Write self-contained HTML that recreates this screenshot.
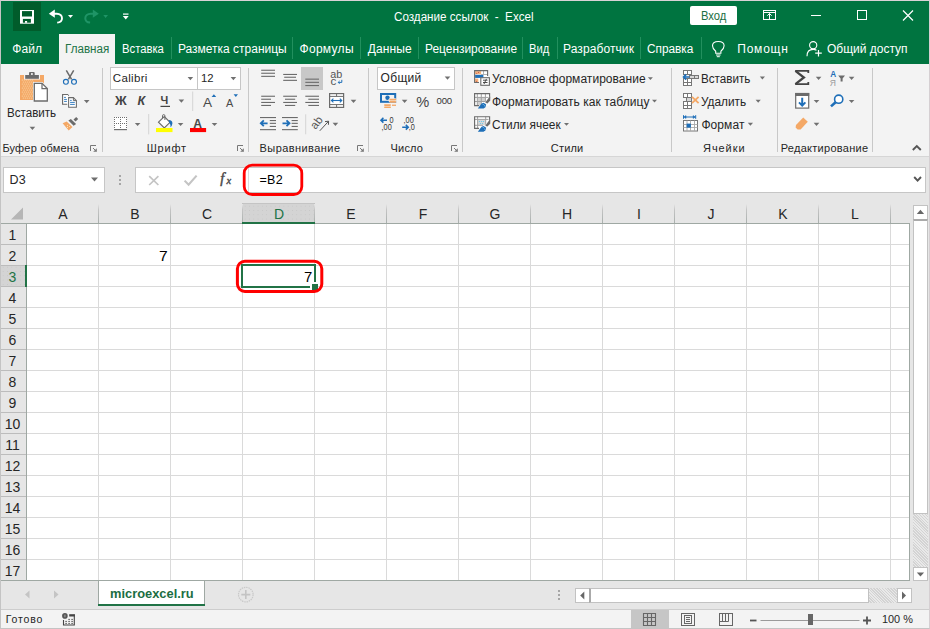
<!DOCTYPE html>
<html><head><meta charset="utf-8">
<style>
*{box-sizing:border-box}
html,body{margin:0;padding:0;width:930px;height:629px;overflow:hidden;background:#e6e6e6;font-family:"Liberation Sans",sans-serif;color:#262626}
.a{position:absolute}
svg{position:absolute;overflow:visible}
.t{position:absolute;white-space:nowrap;line-height:1;transform-origin:0 0}
.tsep{position:absolute;top:37px;width:1px;height:22px;background:#22905e}
.gsep{position:absolute;top:68px;width:1px;height:84px;background:#c8c8c8}
.dd{position:absolute;width:0;height:0;border-left:3.5px solid transparent;border-right:3.5px solid transparent;border-top:4px solid #767676}
.vl{position:absolute;top:224px;width:1px;height:357px;background:#dadada}
.hl{position:absolute;left:27px;width:882px;height:1px;background:#dadada}
.ch{position:absolute;top:207px;width:72px;text-align:center;font-size:14px;color:#262626;line-height:1}
.ch.sel{color:#217346}
.chs{position:absolute;top:204px;width:1px;height:19px;background:linear-gradient(#e6e6e6,#c4c4c4 30%,#a9b0ad)}
.rh{position:absolute;left:0;width:25px;text-align:center;font-size:14px;color:#262626;line-height:1;padding-top:4px;height:21px}
.rh.sel{color:#217346}
.rhs{position:absolute;left:1px;width:25px;height:1px;background:#bcbcbc}
</style></head><body>

<!-- TITLE BAR + TABS -->
<div class="a" style="left:0;top:0;width:930px;height:64px;background:#007440"></div>
<div class="a" style="left:13px;top:2px;width:28px;height:29px;background:#015c2b"></div>
<div class="a" style="left:690px;top:6px;width:47px;height:19px;background:#fff;border-radius:2px"></div>
<div class="a" style="left:59px;top:34px;width:56px;height:30px;background:#f3f3f3"></div>
<div class="tsep" style="left:171px"></div>
<div class="tsep" style="left:292px"></div>
<div class="tsep" style="left:360px"></div>
<div class="tsep" style="left:418px"></div>
<div class="tsep" style="left:522px"></div>
<div class="tsep" style="left:557px"></div>
<div class="tsep" style="left:640px"></div>
<div class="tsep" style="left:701px"></div>

<svg style="left:0;top:0" width="930" height="64">
 <!-- floppy -->
 <rect x="20" y="10" width="14" height="13.7" fill="#fff"/>
 <rect x="22" y="11.1" width="10" height="5.4" fill="#015c2b"/>
 <rect x="22.9" y="18.9" width="8" height="3.8" fill="#015c2b"/>
 <rect x="25" y="21" width="2.1" height="1.8" fill="#fff"/>
 <!-- undo -->
 <path d="M53.5 13.7 H56.8 C60 13.7 62 15.8 62 18.2 C62 20.8 60 22.4 57.2 22.6" fill="none" stroke="#fff" stroke-width="1.9"/>
 <path d="M48.8 13.7 L54.8 9.6 V17.8 Z" fill="#fff"/>
 <path d="M68 15 H73 L70.5 18 Z" fill="#fff"/>
 <!-- redo (disabled) -->
 <path d="M94 13.7 H90.7 C87.5 13.7 85.3 15.8 85.3 18.2 C85.3 20.8 87.3 22.4 90.1 22.6" fill="none" stroke="#1f9466" stroke-width="2"/>
 <path d="M98.8 13.7 L92.8 9.6 V17.8 Z" fill="#1f9466"/>
 <path d="M103.3 15 H108 L105.6 18 Z" fill="#1f9466"/>
 <!-- customize -->
 <rect x="123" y="13.5" width="5.5" height="1.2" fill="#fff"/>
 <path d="M122.8 16 H128.7 L125.75 19.5 Z" fill="#fff"/>
 <!-- ribbon display options -->
 <rect x="763.5" y="10.5" width="12" height="9" fill="none" stroke="#fff" stroke-width="1"/>
 <path d="M763.5 12.5 H775.5" stroke="#fff" stroke-width="1"/>
 <path d="M769.5 13.5 V19.5 M767.3 15.7 L769.5 13.5 L771.7 15.7" fill="none" stroke="#fff" stroke-width="1"/>
 <!-- minimize -->
 <rect x="811" y="15" width="10" height="1" fill="#fff"/>
 <!-- maximize -->
 <rect x="857.5" y="10.5" width="9" height="9" fill="none" stroke="#fff" stroke-width="1"/>
 <!-- close -->
 <path d="M903 10.5 L913 20.5 M913 10.5 L903 20.5" stroke="#fff" stroke-width="1.2"/>
 <!-- lightbulb -->
 <path d="M715.7 51.2 C713.2 49.2 712.5 47.5 712.5 45.8 C712.5 43.2 714.6 41.5 718.3 41.5 C722 41.5 724.1 43.2 724.1 45.8 C724.1 47.5 723.4 49.2 720.9 51.2 V53.2 H715.7 Z" fill="none" stroke="#fff" stroke-width="1.1"/>
 <path d="M716 55 H720.6 M716.8 56.7 H719.8" stroke="#fff" stroke-width="1"/>
 <!-- person plus -->
 <circle cx="813.2" cy="45.2" r="3.6" fill="none" stroke="#fff" stroke-width="1.1"/>
 <path d="M807 56.2 C807 51.6 809.5 49.4 813.2 49.4 C814.6 49.4 815.7 49.7 816.5 50.2" fill="none" stroke="#fff" stroke-width="1.1"/>
 <path d="M815.2 53.2 H821.8 M818.5 49.9 V56.5" stroke="#fff" stroke-width="1.2"/>
</svg>


<!-- RIBBON -->
<div class="a" style="left:0;top:64px;width:930px;height:92px;background:#f3f3f3"></div>
<div class="a" style="left:0;top:156px;width:930px;height:1px;background:#d6d6d6"></div>
<div class="gsep" style="left:102px"></div>
<div class="gsep" style="left:248px"></div>
<div class="gsep" style="left:368px"></div>
<div class="gsep" style="left:462px"></div>
<div class="gsep" style="left:671px"></div>
<div class="gsep" style="left:777px"></div>
<div class="gsep" style="left:872px"></div>
<div class="a" style="left:110px;top:67px;width:88px;height:23px;background:#fff;border:1px solid #c6c6c6"></div>
<div class="a" style="left:197px;top:67px;width:44px;height:23px;background:#fff;border:1px solid #c6c6c6"></div>
<div class="a" style="left:377px;top:67px;width:78px;height:23px;background:#fff;border:1px solid #c6c6c6"></div>
<div class="a" style="left:301px;top:67px;width:22px;height:23px;background:#c8c8c8"></div>
<svg style="left:0;top:0" width="930" height="160"><rect x="20" y="75" width="24" height="25" fill="#f4a866"/>
<circle cx="22.3" cy="80.0" r="0.55" fill="#fbe0b4"/><circle cx="23.3" cy="82.0" r="0.55" fill="#fbe0b4"/><circle cx="22.3" cy="84.0" r="0.55" fill="#fbe0b4"/><circle cx="23.3" cy="86.0" r="0.55" fill="#fbe0b4"/><circle cx="22.3" cy="88.0" r="0.55" fill="#fbe0b4"/><circle cx="23.3" cy="90.0" r="0.55" fill="#fbe0b4"/><circle cx="22.3" cy="92.0" r="0.55" fill="#fbe0b4"/><circle cx="23.3" cy="94.0" r="0.55" fill="#fbe0b4"/><circle cx="22.3" cy="96.0" r="0.55" fill="#fbe0b4"/><circle cx="23.3" cy="98.0" r="0.55" fill="#fbe0b4"/><circle cx="24.3" cy="80.0" r="0.55" fill="#fbe0b4"/><circle cx="25.3" cy="82.0" r="0.55" fill="#fbe0b4"/><circle cx="24.3" cy="84.0" r="0.55" fill="#fbe0b4"/><circle cx="25.3" cy="86.0" r="0.55" fill="#fbe0b4"/><circle cx="24.3" cy="88.0" r="0.55" fill="#fbe0b4"/><circle cx="25.3" cy="90.0" r="0.55" fill="#fbe0b4"/><circle cx="24.3" cy="92.0" r="0.55" fill="#fbe0b4"/><circle cx="25.3" cy="94.0" r="0.55" fill="#fbe0b4"/><circle cx="24.3" cy="96.0" r="0.55" fill="#fbe0b4"/><circle cx="25.3" cy="98.0" r="0.55" fill="#fbe0b4"/><circle cx="26.3" cy="80.0" r="0.55" fill="#fbe0b4"/><circle cx="27.3" cy="82.0" r="0.55" fill="#fbe0b4"/><circle cx="26.3" cy="84.0" r="0.55" fill="#fbe0b4"/><circle cx="27.3" cy="86.0" r="0.55" fill="#fbe0b4"/><circle cx="26.3" cy="88.0" r="0.55" fill="#fbe0b4"/><circle cx="27.3" cy="90.0" r="0.55" fill="#fbe0b4"/><circle cx="26.3" cy="92.0" r="0.55" fill="#fbe0b4"/><circle cx="27.3" cy="94.0" r="0.55" fill="#fbe0b4"/><circle cx="26.3" cy="96.0" r="0.55" fill="#fbe0b4"/><circle cx="27.3" cy="98.0" r="0.55" fill="#fbe0b4"/><circle cx="28.3" cy="80.0" r="0.55" fill="#fbe0b4"/><circle cx="29.3" cy="82.0" r="0.55" fill="#fbe0b4"/><circle cx="28.3" cy="84.0" r="0.55" fill="#fbe0b4"/><circle cx="29.3" cy="86.0" r="0.55" fill="#fbe0b4"/><circle cx="28.3" cy="88.0" r="0.55" fill="#fbe0b4"/><circle cx="29.3" cy="90.0" r="0.55" fill="#fbe0b4"/><circle cx="28.3" cy="92.0" r="0.55" fill="#fbe0b4"/><circle cx="29.3" cy="94.0" r="0.55" fill="#fbe0b4"/><circle cx="28.3" cy="96.0" r="0.55" fill="#fbe0b4"/><circle cx="29.3" cy="98.0" r="0.55" fill="#fbe0b4"/><circle cx="30.3" cy="80.0" r="0.55" fill="#fbe0b4"/><circle cx="31.3" cy="82.0" r="0.55" fill="#fbe0b4"/><circle cx="30.3" cy="84.0" r="0.55" fill="#fbe0b4"/><circle cx="31.3" cy="86.0" r="0.55" fill="#fbe0b4"/><circle cx="30.3" cy="88.0" r="0.55" fill="#fbe0b4"/><circle cx="31.3" cy="90.0" r="0.55" fill="#fbe0b4"/><circle cx="30.3" cy="92.0" r="0.55" fill="#fbe0b4"/><circle cx="31.3" cy="94.0" r="0.55" fill="#fbe0b4"/><circle cx="30.3" cy="96.0" r="0.55" fill="#fbe0b4"/><circle cx="31.3" cy="98.0" r="0.55" fill="#fbe0b4"/><circle cx="32.3" cy="80.0" r="0.55" fill="#fbe0b4"/><circle cx="33.3" cy="82.0" r="0.55" fill="#fbe0b4"/><circle cx="32.3" cy="84.0" r="0.55" fill="#fbe0b4"/><circle cx="33.3" cy="86.0" r="0.55" fill="#fbe0b4"/><circle cx="32.3" cy="88.0" r="0.55" fill="#fbe0b4"/><circle cx="33.3" cy="90.0" r="0.55" fill="#fbe0b4"/><circle cx="32.3" cy="92.0" r="0.55" fill="#fbe0b4"/><circle cx="33.3" cy="94.0" r="0.55" fill="#fbe0b4"/><circle cx="32.3" cy="96.0" r="0.55" fill="#fbe0b4"/><circle cx="33.3" cy="98.0" r="0.55" fill="#fbe0b4"/>
<rect x="24" y="73.5" width="16" height="6" fill="#f3f3f3"/>
<rect x="25.2" y="75" width="13.7" height="3.8" fill="#6b6b6b"/>
<rect x="29" y="72" width="5.7" height="4" rx="1" fill="#6b6b6b"/>
<rect x="31" y="73.2" width="1.8" height="1.6" fill="#fff"/>
<path d="M33 82 H42.5 L48.5 88 V102 H33 Z" fill="#f3f3f3"/>
<path d="M34.3 83.3 H42 L47.3 88.6 V101 H34.3 Z" fill="#fff" stroke="#6b6b6b" stroke-width="1.3"/>
<path d="M42 83.3 V88.6 H47.3" fill="none" stroke="#6b6b6b" stroke-width="1.2"/>
<path d="M29.60 126.70 H35.20 L32.40 129.90 Z" fill="#707070"/>
<path d="M66.3 70.3 L71.6 79.4 M73.7 70.3 L68.4 79.4" stroke="#6b6b6b" stroke-width="1.5"/>
<circle cx="65.9" cy="81.8" r="2.45" fill="none" stroke="#1f6fb8" stroke-width="1.15"/>
<circle cx="74.0" cy="81.8" r="2.45" fill="none" stroke="#1f6fb8" stroke-width="1.15"/>
<path d="M62.6 104.3 V94.6 H67.6 L68.8 95.8" fill="#fff" stroke="#6b6b6b" stroke-width="1.05"/>
<rect x="63.1" y="95.1" width="5" height="9" fill="#fff"/>
<path d="M62.6 104.2 H67.2 M62.6 94.6 V104.7" stroke="#6b6b6b" stroke-width="1.05"/>
<path d="M64.1 97.4 H65.9 M64.1 99.4 H66.9 M64.1 101.4 H66.9" stroke="#1f6fb8" stroke-width="0.9"/>
<path d="M68.6 97.6 H73.4 L76.4 100.6 V107.2 H68.6 Z" fill="#fff" stroke="#6b6b6b" stroke-width="1.05"/>
<path d="M73.4 97.6 V100.6 H76.4" fill="none" stroke="#6b6b6b" stroke-width="1"/>
<path d="M70.1 100.4 H71.7 M70.1 102.4 H74.8 M70.1 104.4 H74.8" stroke="#1f6fb8" stroke-width="0.9"/>
<path d="M83.90 100.00 H89.50 L86.70 103.20 Z" fill="#707070"/>
<path d="M62.6 123.3 L66.7 121.6 L72.5 127.1 L68.7 130.6 Z" fill="#f4a866"/>
<path d="M68.4 120.6 L70.9 118.9 L76.1 124.1 L73.6 125.8 Z" fill="#6b6b6b"/>
<path d="M73.5 119.4 L76.2 116.9 L78.2 118.9 L75.5 121.5 Z" fill="#6b6b6b"/>
<circle cx="67.4" cy="125.4" r="0.55" fill="#fde6b8"/><circle cx="69.5" cy="126.5" r="0.55" fill="#fde6b8"/><circle cx="67.5" cy="127.4" r="0.55" fill="#fde6b8"/>
<path d="M187.60 77.00 H193.20 L190.40 80.20 Z" fill="#707070"/>
<path d="M230.60 77.00 H236.20 L233.40 80.20 Z" fill="#707070"/>
<text x="115" y="104.8" font-family="Liberation Sans" font-weight="bold" font-size="12.3" fill="#444" transform="translate(115 0) scale(1.05 1) translate(-115 0)">Ж</text>
<text x="137.6" y="105" font-family="Liberation Sans" font-weight="bold" font-style="italic" font-size="12.5" fill="#444">К</text>
<text x="160.6" y="103.7" font-family="Liberation Sans" font-weight="bold" font-size="11" fill="#444">Ч</text>
<rect x="160.5" y="105.8" width="9.5" height="1.2" fill="#444"/>
<path d="M178.60 99.60 H184.20 L181.40 102.80 Z" fill="#707070"/>
<rect x="192.2" y="91.5" width="1" height="19.5" fill="#d4d4d4"/>
<text x="203" y="106.8" font-family="Liberation Sans" font-size="13.6" fill="#4a4a4a">A</text>
<path d="M211.6 97 H216.2 L213.9 94.3 Z" fill="#1f6fb8"/>
<text x="226.1" y="106.8" font-family="Liberation Sans" font-size="10.9" fill="#4a4a4a">A</text>
<path d="M233.6 94.3 H238 L235.8 97 Z" fill="#1f6fb8"/>
<rect x="114" y="117" width="13" height="12" fill="#fff"/>
<rect x="114" y="117" width="1" height="1" fill="#6e6e6e"/><rect x="114" y="119" width="1" height="1" fill="#6e6e6e"/><rect x="114" y="121" width="1" height="1" fill="#6e6e6e"/><rect x="114" y="123" width="1" height="1" fill="#6e6e6e"/><rect x="114" y="125" width="1" height="1" fill="#6e6e6e"/><rect x="114" y="127" width="1" height="1" fill="#6e6e6e"/><rect x="116" y="117" width="1" height="1" fill="#6e6e6e"/><rect x="116" y="123" width="1" height="1" fill="#6e6e6e"/><rect x="118" y="117" width="1" height="1" fill="#6e6e6e"/><rect x="118" y="123" width="1" height="1" fill="#6e6e6e"/><rect x="120" y="117" width="1" height="1" fill="#6e6e6e"/><rect x="120" y="119" width="1" height="1" fill="#6e6e6e"/><rect x="120" y="121" width="1" height="1" fill="#6e6e6e"/><rect x="120" y="123" width="1" height="1" fill="#6e6e6e"/><rect x="120" y="125" width="1" height="1" fill="#6e6e6e"/><rect x="120" y="127" width="1" height="1" fill="#6e6e6e"/><rect x="122" y="117" width="1" height="1" fill="#6e6e6e"/><rect x="122" y="123" width="1" height="1" fill="#6e6e6e"/><rect x="124" y="117" width="1" height="1" fill="#6e6e6e"/><rect x="124" y="123" width="1" height="1" fill="#6e6e6e"/><rect x="126" y="117" width="1" height="1" fill="#6e6e6e"/><rect x="126" y="119" width="1" height="1" fill="#6e6e6e"/><rect x="126" y="121" width="1" height="1" fill="#6e6e6e"/><rect x="126" y="123" width="1" height="1" fill="#6e6e6e"/><rect x="126" y="125" width="1" height="1" fill="#6e6e6e"/><rect x="126" y="127" width="1" height="1" fill="#6e6e6e"/>
<rect x="114" y="129" width="13" height="1.2" fill="#6e6e6e"/>
<path d="M134.80 122.90 H140.40 L137.60 126.10 Z" fill="#707070"/>
<rect x="148.2" y="114" width="1" height="20.4" fill="#d4d4d4"/>
<path d="M158.5 122.2 L164.3 116.6 L170 122.3 L164.3 128 Z" fill="#fff" stroke="#6b6b6b" stroke-width="1.1"/>
<path d="M162.5 118 V115.8 Q162.5 114.6 163.7 114.6 Q164.9 114.6 164.9 115.8 V120" fill="none" stroke="#6b6b6b" stroke-width="1"/>
<path d="M168.6 120 Q172.6 120.2 172.4 123.6 Q172.2 126 170.4 127.2 Q170.8 124.6 169.2 122.6 Z" fill="#1f6fb8"/>
<rect x="156" y="128" width="16.5" height="4.1" fill="#ffff00"/>
<path d="M177.80 122.90 H183.40 L180.60 126.10 Z" fill="#707070"/>
<text x="193.2" y="127.8" font-family="Liberation Sans" font-weight="bold" font-size="13.2" fill="#4a4a4a" transform="translate(193.2 0) scale(0.92 1) translate(-193.2 0)">A</text>
<rect x="190" y="128" width="16.1" height="4.1" fill="#ff0000"/>
<path d="M211.70 122.90 H217.30 L214.50 126.10 Z" fill="#707070"/>
<rect x="261.2" y="69.70" width="13.80" height="1.1" fill="#6b6b6b"/><rect x="261.2" y="72.70" width="13.80" height="1.1" fill="#6b6b6b"/><rect x="261.2" y="75.80" width="13.80" height="1.1" fill="#6b6b6b"/>
<rect x="283.2" y="73.90" width="13.80" height="1.1" fill="#6b6b6b"/><rect x="283.2" y="79.80" width="13.80" height="1.1" fill="#6b6b6b"/><rect x="284.2" y="76.70" width="11.80" height="1.1" fill="#6b6b6b"/>
<rect x="305.3" y="78.60" width="13.70" height="1.1" fill="#6b6b6b"/><rect x="305.3" y="81.80" width="13.70" height="1.1" fill="#6b6b6b"/><rect x="305.3" y="85.00" width="13.70" height="1.1" fill="#6b6b6b"/>
<text x="330.2" y="77.7" font-family="Liberation Sans" font-size="11.6" fill="#555" transform="translate(330.2 0) scale(0.93 1) translate(-330.2 0)">ab</text>
<text x="330.6" y="85.2" font-family="Liberation Sans" font-size="11.6" fill="#555">c</text>
<path d="M341.8 79.8 V82.4 H338.2 M339.6 81 L338.2 82.4 L339.6 83.8" fill="none" stroke="#1f6fb8" stroke-width="1"/>
<rect x="261.2" y="95.70" width="13.80" height="1.1" fill="#6b6b6b"/><rect x="261.2" y="101.90" width="13.80" height="1.1" fill="#6b6b6b"/><rect x="261.2" y="98.70" width="9.80" height="1.1" fill="#6b6b6b"/><rect x="261.2" y="104.90" width="9.80" height="1.1" fill="#6b6b6b"/>
<rect x="283.2" y="95.70" width="13.80" height="1.1" fill="#6b6b6b"/><rect x="283.2" y="101.90" width="13.80" height="1.1" fill="#6b6b6b"/><rect x="285" y="98.70" width="10.20" height="1.1" fill="#6b6b6b"/><rect x="285" y="104.90" width="10.20" height="1.1" fill="#6b6b6b"/>
<rect x="305.3" y="95.70" width="13.70" height="1.1" fill="#6b6b6b"/><rect x="305.3" y="101.90" width="13.70" height="1.1" fill="#6b6b6b"/><rect x="308.3" y="98.70" width="10.70" height="1.1" fill="#6b6b6b"/><rect x="308.3" y="104.90" width="10.70" height="1.1" fill="#6b6b6b"/>
<rect x="329.6" y="93.6" width="14" height="13.8" fill="#fff" stroke="#6b6b6b" stroke-width="1.2"/>
<path d="M329.6 96.4 H343.6 M329.6 104.6 H343.6 M336.6 93.6 V96.4 M336.6 104.6 V107.4" stroke="#6b6b6b" stroke-width="1"/>
<path d="M331.8 100.5 H341.4" stroke="#1f6fb8" stroke-width="1.1"/>
<path d="M333.4 98.6 L331.4 100.5 L333.4 102.4 M339.8 98.6 L341.8 100.5 L339.8 102.4" fill="none" stroke="#1f6fb8" stroke-width="1.1"/>
<path d="M350.70 99.80 H356.30 L353.50 103.00 Z" fill="#707070"/>
<rect x="260" y="117.00" width="16.00" height="1.1" fill="#6b6b6b"/><rect x="260" y="129.10" width="16.00" height="1.1" fill="#6b6b6b"/><rect x="269.8" y="120.00" width="6.20" height="1.1" fill="#6b6b6b"/><rect x="269.8" y="122.80" width="6.20" height="1.1" fill="#6b6b6b"/><rect x="269.8" y="125.90" width="6.20" height="1.1" fill="#6b6b6b"/>
<path d="M261 123.3 H267.6 M263.8 120.4 L260.8 123.3 L263.8 126.2" fill="none" stroke="#1f6fb8" stroke-width="1.8"/>
<rect x="282" y="117.00" width="15.80" height="1.1" fill="#6b6b6b"/><rect x="282" y="129.10" width="15.80" height="1.1" fill="#6b6b6b"/><rect x="291.6" y="120.00" width="6.20" height="1.1" fill="#6b6b6b"/><rect x="291.6" y="122.80" width="6.20" height="1.1" fill="#6b6b6b"/><rect x="291.6" y="125.90" width="6.20" height="1.1" fill="#6b6b6b"/>
<path d="M282.5 123.3 H289.3 M286.5 120.4 L289.5 123.3 L286.5 126.2" fill="none" stroke="#1f6fb8" stroke-width="1.8"/>
<rect x="305.2" y="114.3" width="1" height="20" fill="#d4d4d4"/>
<text x="0" y="0" font-family="Liberation Sans" font-size="11.5" fill="#555" transform="translate(315.6 130) rotate(-52)">ab</text>
<path d="M319.8 130.8 L328.6 121.2 M325 121.6 L328.6 121.2 L328.4 124.8" fill="none" stroke="#555" stroke-width="1"/>
<path d="M332.60 122.80 H338.20 L335.40 126.00 Z" fill="#707070"/>
<path d="M90.5 151 V145.5 H96" fill="none" stroke="#777" stroke-width="1"/><path d="M93 148 L96.2 151.2" stroke="#777" stroke-width="1"/><path d="M96.8 148.2 V151.8 H93.2 Z" fill="#777"/>
<path d="M237.5 151 V145.5 H243" fill="none" stroke="#777" stroke-width="1"/><path d="M240 148 L243.2 151.2" stroke="#777" stroke-width="1"/><path d="M243.8 148.2 V151.8 H240.2 Z" fill="#777"/>
<path d="M357.5 151 V145.5 H363" fill="none" stroke="#777" stroke-width="1"/><path d="M360 148 L363.2 151.2" stroke="#777" stroke-width="1"/><path d="M363.8 148.2 V151.8 H360.2 Z" fill="#777"/>
<path d="M451.5 151 V145.5 H457" fill="none" stroke="#777" stroke-width="1"/><path d="M454 148 L457.2 151.2" stroke="#777" stroke-width="1"/><path d="M457.8 148.2 V151.8 H454.2 Z" fill="#777"/>
<path d="M444.70 76.50 H450.30 L447.50 79.70 Z" fill="#707070"/>
<rect x="381" y="94" width="14.2" height="7.8" fill="none" stroke="#1f6fb8" stroke-width="2"/>
<circle cx="387.5" cy="97.8" r="2.2" fill="#1f6fb8"/>
<rect x="388.6" y="98.2" width="8" height="4" rx="1.5" fill="#f3f3f3"/>
<rect x="389.4" y="98.8" width="6.8" height="1.7" rx="0.8" fill="#f4a866"/><rect x="389.4" y="101" width="6.8" height="1.7" rx="0.8" fill="#f4a866"/>
<rect x="384" y="104.2" width="7" height="1.7" rx="0.8" fill="#f4a866"/><rect x="384" y="106.4" width="7" height="1.7" rx="0.8" fill="#f4a866"/><rect x="392" y="104.6" width="4" height="1.3" fill="#f4a866"/>
<path d="M401.80 99.80 H407.40 L404.60 103.00 Z" fill="#707070"/>
<text x="416.2" y="106.8" font-family="Liberation Sans" font-size="14.6" fill="#444">%</text>
<text x="436.6" y="103.9" font-family="Liberation Sans" font-size="9.6" fill="#333" letter-spacing="-0.2">000</text>
<path d="M381 120.2 H387 M383.4 117.8 L381 120.2 L383.4 122.6" fill="none" stroke="#1f6fb8" stroke-width="1.6"/>
<text x="389.4" y="122.7" font-family="Liberation Sans" font-size="8.6" fill="#333" transform="translate(389.4 0) scale(0.85 1) translate(-389.4 0)">0</text>
<text x="381.6" y="129.8" font-family="Liberation Sans" font-size="8.6" fill="#333" transform="translate(381.6 0) scale(0.85 1) translate(-381.6 0)">,00</text>
<text x="403.6" y="122.7" font-family="Liberation Sans" font-size="8.6" fill="#333" transform="translate(403.6 0) scale(0.85 1) translate(-403.6 0)">,00</text>
<path d="M402.2 127.2 H408.2 M405.8 124.8 L408.2 127.2 L405.8 129.6" fill="none" stroke="#1f6fb8" stroke-width="1.6"/>
<text x="408.8" y="129.8" font-family="Liberation Sans" font-size="8.6" fill="#333" transform="translate(408.8 0) scale(0.85 1) translate(-408.8 0)">,0</text>
<rect x="474.6" y="70.6" width="13" height="12" fill="#fff"/>
<rect x="475.1" y="71.1" width="6" height="3.1" fill="#f7b27a"/><rect x="475.1" y="78.6" width="3.2" height="3.6" fill="#f7b27a"/>
<circle cx="476.7" cy="73.2" r="0.55" fill="#c0504d"/><circle cx="478.5" cy="72.5" r="0.55" fill="#c0504d"/><circle cx="476.5" cy="81.2" r="0.55" fill="#c0504d"/>
<rect x="475.1" y="74.8" width="8.3" height="3.1" fill="#1f6fb8"/>
<path d="M483.5 71 V74.6 M481 74.5 H487.8" stroke="#aaa" stroke-width="0.9"/>
<path d="M487.6 76 V70.6 H474.6 V82.5 H479" fill="none" stroke="#6b6b6b" stroke-width="1.1"/>
<rect x="480.8" y="77.7" width="8.6" height="7.6" fill="#fff" stroke="#6b6b6b" stroke-width="1.1"/>
<path d="M483 80.2 H487.5 M483 82.5 H487.5 M486.5 78.9 L484 84" stroke="#444" stroke-width="0.95"/>
<rect x="474.6" y="93.6" width="15" height="12" fill="#fff"/>
<rect x="477.2" y="97.3" width="8.2" height="4.2" fill="#d0d0d0"/><rect x="477.2" y="101.5" width="4" height="4" fill="#d0d0d0"/>
<path d="M477.3 93.6 V105.6 M481.3 93.6 V105.6 M485.4 93.6 V102 M474.6 97.4 H488.5 M474.6 101.5 H486" stroke="#a0a0a0" stroke-width="1"/>
<path d="M489.6 97.5 V93.6 H474.6 V105.6 H479" fill="none" stroke="#6b6b6b" stroke-width="1.15"/>
<path d="M483.6 104.2 L490.6 95.6 L490.6 101.2 L487.2 104.6 Z" fill="#f3f3f3"/><path d="M489.9 96.2 L490.3 96.8 L490.2 100.6 L487.4 103.4 L485.3 102.6 Z" fill="#6b6b6b"/><path d="M477.8 108.6 L481.6 103.6 L483.6 102.8 L486.2 104.6 L485.4 107.2 L483.6 108.6 Z" fill="#1f6fb8"/><circle cx="483.2" cy="104.4" r="0.5" fill="#9fd8f5"/><circle cx="484.6" cy="105.8" r="0.5" fill="#9fd8f5"/>
<rect x="474.6" y="116.7" width="15" height="11.7" fill="#fff"/>
<rect x="477.6" y="119.4" width="8" height="5.9" fill="#d8d8d8"/>
<circle cx="479.4" cy="121.5" r="0.6" fill="#5bc8ef"/><circle cx="481.5" cy="121.5" r="0.6" fill="#5bc8ef"/><circle cx="483.5" cy="121.5" r="0.6" fill="#5bc8ef"/><circle cx="480.4" cy="123.5" r="0.6" fill="#5bc8ef"/><circle cx="482.5" cy="123.5" r="0.6" fill="#5bc8ef"/>
<path d="M477.6 116.7 V128.4 M485.7 116.7 V125 M474.6 119.4 H488.5 M474.6 125.3 H483" stroke="#a0a0a0" stroke-width="1"/>
<path d="M489.6 120.5 V116.7 H474.6 V128.4 H479" fill="none" stroke="#6b6b6b" stroke-width="1.15"/>
<path d="M483.6 127.30000000000001 L490.6 118.69999999999999 L490.6 124.30000000000001 L487.2 127.69999999999999 Z" fill="#f3f3f3"/><path d="M489.9 119.30000000000001 L490.3 119.9 L490.2 123.69999999999999 L487.4 126.5 L485.3 125.69999999999999 Z" fill="#6b6b6b"/><path d="M477.8 131.7 L481.6 126.69999999999999 L483.6 125.9 L486.2 127.69999999999999 L485.4 130.3 L483.6 131.7 Z" fill="#1f6fb8"/><circle cx="483.2" cy="127.5" r="0.5" fill="#9fd8f5"/><circle cx="484.6" cy="128.9" r="0.5" fill="#9fd8f5"/>
<path d="M647.90 77.20 H652.90 L650.40 80.00 Z" fill="#707070"/>
<path d="M652.00 99.80 H657.00 L654.50 102.60 Z" fill="#707070"/>
<path d="M564.00 122.90 H569.00 L566.50 125.70 Z" fill="#707070"/>
<rect x="683.5" y="70.5" width="8" height="4" fill="#fff" stroke="#777" stroke-width="1"/><path d="M687.5 70.5 V74.5" stroke="#777" stroke-width="1"/>
<rect x="683.5" y="78.5" width="8" height="7" fill="#fff" stroke="#777" stroke-width="1"/><path d="M683.5 82.5 H691.5 M687.5 78.5 V85.5" stroke="#777" stroke-width="1"/>
<rect x="689.5" y="75.5" width="9" height="3" fill="#d6d6d6" stroke="#777" stroke-width="1"/><path d="M694.5 75.5 V78.5" stroke="#777" stroke-width="1"/>
<path d="M683.6 77 H689.4 M686.2 74.4 L683.6 77 L686.2 79.6" fill="none" stroke="#1f6fb8" stroke-width="1.7"/>
<path d="M759.80 76.50 H765.00 L762.40 79.50 Z" fill="#707070"/>
<rect x="683.5" y="93.5" width="8" height="4" fill="#fff" stroke="#777" stroke-width="1"/><path d="M687.5 93.5 V97.5" stroke="#777" stroke-width="1"/>
<rect x="683.5" y="101.5" width="8" height="7" fill="#fff" stroke="#777" stroke-width="1"/><path d="M683.5 105.5 H691.5 M687.5 101.5 V108.5" stroke="#777" stroke-width="1"/>
<rect x="686.5" y="97.5" width="5" height="4" fill="#d6d6d6" stroke="#777" stroke-width="1"/>
<path d="M692 96.8 L698.6 103.2 M698.6 96.8 L692 103.2" stroke="#f4a866" stroke-width="1.8"/>
<path d="M755.60 99.70 H760.80 L758.20 102.70 Z" fill="#707070"/>
<path d="M683.6 117 H695.6" stroke="#1f6fb8" stroke-width="1"/>
<path d="M683.5 115.2 V118.8 M695.7 115.2 V118.8" stroke="#1f6fb8" stroke-width="1"/>
<path d="M686 115.6 L684.2 117 L686 118.4 Z M693.2 115.6 L695 117 L693.2 118.4 Z" fill="#1f6fb8" stroke="#1f6fb8" stroke-width="0.6"/>
<rect x="683.5" y="120.5" width="14" height="10.5" fill="#fff" stroke="#777" stroke-width="1"/>
<path d="M683.5 124.5 H697.5 M683.5 127.5 H697.5 M687 120.5 V131 M690.5 120.5 V131 M694.5 120.5 V131" stroke="#a8a8a8" stroke-width="0.9"/>
<rect x="686.6" y="123.6" width="4.3" height="4" fill="#1f6fb8"/>
<path d="M747.80 122.80 H753.00 L750.40 125.80 Z" fill="#707070"/>
<path d="M795.2 70.9 H808.3 V72.9 M795.2 84.1 H808.3 V82" fill="none" stroke="#444" stroke-width="1.8"/>
<path d="M795.4 70.9 L803.9 77.5 L795.4 84.1" fill="none" stroke="#444" stroke-width="2.3" stroke-linejoin="miter"/>
<path d="M815.80 76.70 H821.40 L818.60 79.90 Z" fill="#707070"/>
<text x="830.2" y="76.8" font-family="Liberation Sans" font-weight="bold" font-size="8.2" fill="#1f6fb8">A</text>
<text x="829.8" y="86" font-family="Liberation Sans" font-size="8.6" fill="#9a9a9a">Я</text>
<path d="M838.2 75.4 H845 L842.6 78.4 V81.6 H840.6 V78.4 Z" fill="#6b6b6b"/>
<path d="M848.80 76.70 H854.40 L851.60 79.90 Z" fill="#707070"/>
<rect x="795.7" y="93.5" width="13" height="14.6" fill="#fff" stroke="#6b6b6b" stroke-width="1.2"/>
<rect x="795.2" y="93" width="14" height="3" fill="#6b6b6b"/>
<path d="M802.2 97.8 V105.5 M799 102.4 L802.2 105.6 L805.4 102.4" fill="none" stroke="#1f6fb8" stroke-width="2"/>
<path d="M813.70 99.90 H819.30 L816.50 103.10 Z" fill="#707070"/>
<circle cx="838.7" cy="99.2" r="4.1" fill="#fff" stroke="#1f6fb8" stroke-width="1.6"/>
<path d="M831 106.4 L835.6 102.2" stroke="#1f6fb8" stroke-width="2.6" stroke-linecap="butt"/>
<path d="M848.80 99.90 H854.40 L851.60 103.10 Z" fill="#707070"/>
<path d="M796 125 L803.2 117.4 L807.8 121.8 L800.6 129.4 L797.6 129.4 L795.6 127.4 Z" fill="#f4a866"/>
<path d="M813.70 122.70 H819.30 L816.50 125.90 Z" fill="#707070"/>
<path d="M912.8 150 L916.8 146 L920.8 150" fill="none" stroke="#555" stroke-width="1.9"/></svg>

<!-- FORMULA BAR -->
<div class="a" style="left:3px;top:167px;width:102px;height:26px;background:#fff;border:1px solid #c6c6c6"></div>
<div class="a" style="left:135px;top:167px;width:791px;height:26px;background:#fff;border:1px solid #c6c6c6"></div>
<div class="a" style="left:248px;top:168px;width:1px;height:24px;background:#dcdcdc"></div>

<svg style="left:0;top:0" width="930" height="629">
 <path d="M91 177.5 L98 177.5 L94.5 181.5 Z" fill="#6e6e6e"/>
 <rect x="119" y="175" width="2" height="2" fill="#a6a6a6"/>
 <rect x="119" y="179" width="2" height="2" fill="#a6a6a6"/>
 <rect x="119" y="183" width="2" height="2" fill="#a6a6a6"/>
 <path d="M149.2 176.2 L158.4 185 M158.4 176.2 L149.2 185" stroke="#c4c4c4" stroke-width="1.7" fill="none"/>
 <path d="M184.6 180.6 L188.6 184.8 L196.6 175.6" stroke="#c4c4c4" stroke-width="2.1" fill="none"/>
 <text x="220.3" y="183.2" font-family="Liberation Serif" font-style="italic" font-size="14.5" fill="#4a4a4a" stroke="#4a4a4a" stroke-width="0.45">f</text>
 <text x="226.6" y="183.6" font-family="Liberation Serif" font-style="italic" font-size="10.5" fill="#4a4a4a" stroke="#4a4a4a" stroke-width="0.35">x</text>
 <path d="M914.2 177 L917.6 180.6 L921 177" stroke="#555" stroke-width="1.9" fill="none"/>
 <rect x="244.2" y="165.2" width="57.6" height="29.3" rx="8" ry="8" fill="none" stroke="#ff0000" stroke-width="2.8"/>
</svg>


<!-- GRID -->
<div class="a" style="left:1px;top:203px;width:908px;height:20px;background:#e6e6e6"></div>
<div class="a" style="left:242px;top:203px;width:73px;height:20px;background-color:#d4d4d4;background-image:radial-gradient(circle,#c6c6c6 0.6px,transparent 0.8px);background-size:4.3px 4.3px;border-top:1px solid #c4c4c4;border-left:1px solid #bdbdbd;border-right:1px solid #bdbdbd"></div>
<div class="a" style="left:27px;top:224px;width:883px;height:357px;background:#fff"></div>
<div class="a" style="left:1px;top:224px;width:25px;height:357px;background:#e6e6e6"></div>
<div class="a" style="left:1px;top:265px;width:25px;height:22px;background-color:#d4d4d4;background-image:radial-gradient(circle,#c6c6c6 0.6px,transparent 0.8px);background-size:4.3px 4.3px"></div>
<div class="vl" style="left:98px"></div>
<div class="vl" style="left:170px"></div>
<div class="vl" style="left:242px"></div>
<div class="vl" style="left:314px"></div>
<div class="vl" style="left:386px"></div>
<div class="vl" style="left:458px"></div>
<div class="vl" style="left:530px"></div>
<div class="vl" style="left:602px"></div>
<div class="vl" style="left:674px"></div>
<div class="vl" style="left:746px"></div>
<div class="vl" style="left:818px"></div>
<div class="vl" style="left:890px"></div>
<div class="hl" style="top:244px"></div>
<div class="hl" style="top:265px"></div>
<div class="hl" style="top:286px"></div>
<div class="hl" style="top:307px"></div>
<div class="hl" style="top:328px"></div>
<div class="hl" style="top:349px"></div>
<div class="hl" style="top:370px"></div>
<div class="hl" style="top:391px"></div>
<div class="hl" style="top:412px"></div>
<div class="hl" style="top:433px"></div>
<div class="hl" style="top:454px"></div>
<div class="hl" style="top:475px"></div>
<div class="hl" style="top:496px"></div>
<div class="hl" style="top:517px"></div>
<div class="hl" style="top:538px"></div>
<div class="hl" style="top:559px"></div>
<div class="hl" style="top:580px"></div>
<div class="chs" style="left:98px"></div>
<div class="chs" style="left:170px"></div>
<div class="chs" style="left:242px"></div>
<div class="chs" style="left:314px"></div>
<div class="chs" style="left:386px"></div>
<div class="chs" style="left:458px"></div>
<div class="chs" style="left:530px"></div>
<div class="chs" style="left:602px"></div>
<div class="chs" style="left:674px"></div>
<div class="chs" style="left:746px"></div>
<div class="chs" style="left:818px"></div>
<div class="chs" style="left:890px"></div>
<div class="ch" style="left:27px">A</div>
<div class="ch" style="left:99px">B</div>
<div class="ch" style="left:171px">C</div>
<div class="ch sel" style="left:243px">D</div>
<div class="ch" style="left:315px">E</div>
<div class="ch" style="left:387px">F</div>
<div class="ch" style="left:459px">G</div>
<div class="ch" style="left:531px">H</div>
<div class="ch" style="left:603px">I</div>
<div class="ch" style="left:675px">J</div>
<div class="ch" style="left:747px">K</div>
<div class="ch" style="left:819px">L</div>
<div class="rh" style="top:224px">1</div>
<div class="rhs" style="top:244px"></div>
<div class="rh" style="top:245px">2</div>
<div class="rhs" style="top:265px"></div>
<div class="rh sel" style="top:266px">3</div>
<div class="rhs" style="top:286px"></div>
<div class="rh" style="top:287px">4</div>
<div class="rhs" style="top:307px"></div>
<div class="rh" style="top:308px">5</div>
<div class="rhs" style="top:328px"></div>
<div class="rh" style="top:329px">6</div>
<div class="rhs" style="top:349px"></div>
<div class="rh" style="top:350px">7</div>
<div class="rhs" style="top:370px"></div>
<div class="rh" style="top:371px">8</div>
<div class="rhs" style="top:391px"></div>
<div class="rh" style="top:392px">9</div>
<div class="rhs" style="top:412px"></div>
<div class="rh" style="top:413px">10</div>
<div class="rhs" style="top:433px"></div>
<div class="rh" style="top:434px">11</div>
<div class="rhs" style="top:454px"></div>
<div class="rh" style="top:455px">12</div>
<div class="rhs" style="top:475px"></div>
<div class="rh" style="top:476px">13</div>
<div class="rhs" style="top:496px"></div>
<div class="rh" style="top:497px">14</div>
<div class="rhs" style="top:517px"></div>
<div class="rh" style="top:518px">15</div>
<div class="rhs" style="top:538px"></div>
<div class="rh" style="top:539px">16</div>
<div class="rhs" style="top:559px"></div>
<div class="rh" style="top:560px">17</div>
<div class="rhs" style="top:580px"></div>
<div class="a" style="left:26px;top:224px;width:1px;height:357px;background:#9fa8a3"></div>
<div class="a" style="left:25px;top:265px;width:2px;height:22px;background:#217346"></div>
<div class="a" style="left:1px;top:223px;width:909px;height:1px;background:#9fa8a3"></div>
<div class="a" style="left:909px;top:223px;width:1px;height:358px;background:#9fa8a3"></div>
<div class="a" style="left:1px;top:580px;width:909px;height:1px;background:#9fa8a3"></div>
<div class="a" style="left:242px;top:222px;width:73px;height:2px;background:#217346"></div>
<!-- select all triangle -->
<svg style="left:0;top:0" width="930" height="629"><path d="M11 219.5 L23 219.5 L23 207.5 Z" fill="#b6b6b6"/></svg>
<!-- cell values -->

<div class="a" style="left:241px;top:264px;width:75px;height:24px;border:2px solid #217346"></div>
<div class="a" style="left:310px;top:282px;width:8px;height:8px;background:#fff"></div>
<div class="a" style="left:311.5px;top:283.5px;width:6px;height:6px;background:#217346"></div>
<svg style="left:0;top:0" width="930" height="629">
 <rect x="237.4" y="261.3" width="84.4" height="30.2" rx="7.5" ry="7.5" fill="none" stroke="#ff0000" stroke-width="3"/>
</svg>


<!-- SCROLLBARS / SHEET TABS / STATUS -->
<div class="a" style="left:0;top:609px;width:930px;height:1px;background:#cdcdcd"></div>
<div class="a" style="left:0;top:610px;width:930px;height:19px;background:#f3f3f3"></div>

<div class="a" style="left:98px;top:581px;width:107px;height:25px;background:#fff;border-left:1px solid #9fa8a3;border-right:1px solid #9fa8a3"></div>
<div class="a" style="left:98px;top:604px;width:107px;height:2px;background:#217346"></div>
<svg style="left:0;top:0" width="930" height="629">
 <path d="M29.5 590.5 L25 594.5 L29.5 598.5 Z" fill="#c4c4c4"/>
 <path d="M54 590.5 L58.5 594.5 L54 598.5 Z" fill="#c4c4c4"/>
 <circle cx="245.8" cy="594.6" r="7.3" fill="none" stroke="#c9c9c9" stroke-width="1.2" stroke-dasharray="1.5 0.8"/>
 <path d="M241.3 594.6 H250.3 M245.8 590.1 V599.1" stroke="#c4c4c4" stroke-width="1.6"/>
 <rect x="558" y="590" width="2" height="2" fill="#a6a6a6"/>
 <rect x="558" y="594" width="2" height="2" fill="#a6a6a6"/>
 <rect x="558" y="598" width="2" height="2" fill="#a6a6a6"/>
</svg>
<!-- h scroll -->
<div class="a" style="left:868px;top:588px;width:29px;height:15px;background:repeating-linear-gradient(45deg,#d3d3d3 0 1px,#e9e9e9 1px 2px)"></div>
<div class="a" style="left:575px;top:588px;width:15px;height:15px;background:#fff;border:1px solid #c2c2c2"></div>
<div class="a" style="left:589px;top:588px;width:280px;height:15px;background:#fff;border:1px solid #c2c2c2;border-left:2px solid #aaaaaa"></div>
<div class="a" style="left:897px;top:588px;width:15px;height:15px;background:#fff;border:1px solid #c2c2c2"></div>
<!-- v scroll -->
<div class="a" style="left:913px;top:513px;width:15px;height:55px;background:repeating-linear-gradient(45deg,#d3d3d3 0 1px,#e9e9e9 1px 2px)"></div>
<div class="a" style="left:913px;top:205px;width:15px;height:15px;background:#fff;border:1px solid #c2c2c2"></div>
<div class="a" style="left:913px;top:219px;width:15px;height:295px;background:#fff;border:1px solid #c2c2c2;border-top:2px solid #aaaaaa"></div>
<div class="a" style="left:913px;top:567px;width:15px;height:14px;background:#fff;border:1px solid #c2c2c2"></div>
<svg style="left:0;top:0" width="930" height="629">
 <path d="M584.3 591.5 L580.2 595.5 L584.3 599.5 Z" fill="#666"/>
 <path d="M902 591.5 L906 595.5 L902 599.5 Z" fill="#666"/>
 <path d="M916.8 213.9 L924.1 213.9 L920.45 209.8 Z" fill="#666"/>
 <path d="M916.8 572.4 L924.1 572.4 L920.45 576.5 Z" fill="#666"/>
</svg>
<!-- status -->
<div class="a" style="left:631px;top:610px;width:38px;height:18px;background:#c6c6c6"></div>
<svg style="left:0;top:0" width="930" height="629">
 <!-- macro icon -->
 <circle cx="64.9" cy="615.9" r="2.8" fill="#555"/>
 <rect x="64.6" y="614.6" width="0.7" height="2.6" fill="#ccc"/>
 <rect x="69.2" y="614.2" width="5.6" height="2.3" fill="#444"/>
 <path d="M74.3 614.5 V625 H63.5 V620" fill="none" stroke="#444" stroke-width="1.1"/>
 <path d="M68.4 619.4 H69.8 M71.4 619.4 H72.8 M65.4 621.4 H66.8 M68.4 621.4 H69.8 M71.4 621.4 H72.8 M65.4 623.4 H66.8 M68.4 623.4 H69.8 M71.4 623.4 H72.8" stroke="#444" stroke-width="1"/>
 <!-- normal grid icon -->
 <path d="M643.5 613.5 H655.5 V625.5 H643.5 Z M643.5 617.5 H655.5 M643.5 621.5 H655.5 M647.5 613.5 V625.5 M651.5 613.5 V625.5" fill="none" stroke="#666" stroke-width="1.1"/>
 <!-- page layout -->
 <rect x="681.5" y="613.5" width="13" height="12" fill="none" stroke="#666" stroke-width="1"/>
 <rect x="684.5" y="615.5" width="7" height="8" fill="none" stroke="#666" stroke-width="1"/>
 <path d="M686 617.5 H690 M686 619.5 H690 M686 621.5 H690" stroke="#666" stroke-width="1"/>
 <!-- page break -->
 <rect x="719.5" y="613.5" width="13" height="12" fill="none" stroke="#666" stroke-width="1"/>
 <path d="M719.5 621.5 H728.5 V613.5 M722.5 613.5 V621.5 M725.5 613.5 V621.5" fill="none" stroke="#666" stroke-width="1"/>
 <!-- zoom -->
 <path d="M750 620.5 H756.5" stroke="#555" stroke-width="1.8"/>
 <path d="M760.5 620.5 H859.5" stroke="#9a9a9a" stroke-width="1"/>
 <rect x="808" y="614" width="5" height="11" fill="#666"/>
 <path d="M863 620.5 H871 M867 616.5 V624.5" stroke="#555" stroke-width="1.8"/>
</svg>


<div class="t" style="left:393.57px;top:10.72px;font-size:12.5px;color:#fff;font-weight:400;transform:scaleX(0.9318)">Создание ссылок&nbsp;&nbsp;-&nbsp;&nbsp;Excel</div>
<div class="t" style="left:700.60px;top:9.62px;font-size:12.5px;color:#1b6e42;font-weight:400;transform:scaleX(0.8963)">Вход</div>
<div class="t" style="left:12.30px;top:42.94px;font-size:12px;color:#fff;font-weight:400;letter-spacing:0.067px">Файл</div>
<div class="t" style="left:64.73px;top:42.94px;font-size:12px;color:#217346;font-weight:400;transform:scaleX(0.9682)">Главная</div>
<div class="t" style="left:122.46px;top:42.94px;font-size:12px;color:#fff;font-weight:400;transform:scaleX(0.9386)">Вставка</div>
<div class="t" style="left:178.00px;top:42.94px;font-size:12px;color:#fff;font-weight:400;transform:scaleX(0.9981)">Разметка страницы</div>
<div class="t" style="left:299.50px;top:42.94px;font-size:12px;color:#fff;font-weight:400;letter-spacing:0.300px">Формулы</div>
<div class="t" style="left:367.70px;top:42.94px;font-size:12px;color:#fff;font-weight:400;letter-spacing:0.140px">Данные</div>
<div class="t" style="left:424.91px;top:42.94px;font-size:12px;color:#fff;font-weight:400;transform:scaleX(0.9934)">Рецензирование</div>
<div class="t" style="left:529.47px;top:42.94px;font-size:12px;color:#fff;font-weight:400;transform:scaleX(0.9333)">Вид</div>
<div class="t" style="left:563.00px;top:42.94px;font-size:12px;color:#fff;font-weight:400;letter-spacing:0.090px">Разработчик</div>
<div class="t" style="left:647.22px;top:42.94px;font-size:12px;color:#fff;font-weight:400;transform:scaleX(0.9848)">Справка</div>
<div class="t" style="left:737.30px;top:42.94px;font-size:12px;color:#fff;font-weight:400;letter-spacing:0.760px">Помощн</div>
<div class="t" style="left:826.60px;top:42.94px;font-size:12px;color:#fff;font-weight:400;transform:scaleX(0.9987)">Общий доступ</div>
<div class="t" style="left:7.43px;top:106.54px;font-size:12px;color:#262626;font-weight:400;transform:scaleX(0.9653)">Вставить</div>
<div class="t" style="left:112.80px;top:72.87px;font-size:11.5px;color:#262626;font-weight:400;letter-spacing:0.333px">Calibri</div>
<div class="t" style="left:200.92px;top:72.87px;font-size:11.5px;color:#262626;font-weight:400;transform:scaleX(0.9818)">12</div>
<div class="t" style="left:380.60px;top:72.44px;font-size:12px;color:#262626;font-weight:400;letter-spacing:0.300px">Общий</div>
<div class="t" style="left:492.10px;top:73.14px;font-size:12px;color:#262626;font-weight:400;letter-spacing:0.041px">Условное форматирование</div>
<div class="t" style="left:492.10px;top:96.34px;font-size:12px;color:#262626;font-weight:400;letter-spacing:0.050px">Форматировать как таблицу</div>
<div class="t" style="left:492.11px;top:118.54px;font-size:12px;color:#262626;font-weight:400;transform:scaleX(0.9912)">Стили ячеек</div>
<div class="t" style="left:701.43px;top:72.84px;font-size:12px;color:#262626;font-weight:400;transform:scaleX(0.9714)">Вставить</div>
<div class="t" style="left:701.42px;top:95.84px;font-size:12px;color:#262626;font-weight:400;transform:scaleX(0.9841)">Удалить</div>
<div class="t" style="left:701.40px;top:118.84px;font-size:12px;color:#262626;font-weight:400;letter-spacing:0.080px">Формат</div>
<div class="t" style="left:2.40px;top:142.79px;font-size:11px;color:#262626;font-weight:400;letter-spacing:0.182px">Буфер обмена</div>
<div class="t" style="left:146.70px;top:142.79px;font-size:11px;color:#262626;font-weight:400;letter-spacing:0.800px">Шрифт</div>
<div class="t" style="left:259.60px;top:142.79px;font-size:11px;color:#262626;font-weight:400;letter-spacing:0.427px">Выравнивание</div>
<div class="t" style="left:390.50px;top:142.79px;font-size:11px;color:#262626;font-weight:400;letter-spacing:0.200px">Число</div>
<div class="t" style="left:550.80px;top:142.79px;font-size:11px;color:#262626;font-weight:400;letter-spacing:0.175px">Стили</div>
<div class="t" style="left:703.00px;top:142.79px;font-size:11px;color:#262626;font-weight:400;letter-spacing:0.940px">Ячейки</div>
<div class="t" style="left:780.70px;top:142.79px;font-size:11px;color:#262626;font-weight:400;letter-spacing:0.277px">Редактирование</div>
<div class="t" style="left:9.60px;top:174.42px;font-size:12.5px;color:#262626;font-weight:400;letter-spacing:0.200px">D3</div>
<div class="t" style="left:259.40px;top:174.02px;font-size:12.5px;color:#000;font-weight:400;letter-spacing:0.400px">=B2</div>
<div class="t" style="left:5.70px;top:613.61px;font-size:10.5px;color:#262626;font-weight:400;letter-spacing:0.840px">Готово</div>
<div class="t" style="left:881.51px;top:613.89px;font-size:11px;color:#262626;font-weight:400;transform:scaleX(0.9900)">100 %</div>
<div class="t" style="left:159.38px;top:249.15px;font-size:14px;color:#000;font-weight:400;transform:scaleX(1.1167)">7</div>
<div class="t" style="left:303.73px;top:270.15px;font-size:14px;color:#000;font-weight:400;transform:scaleX(1.0667)">7</div>
<div class="t" style="left:109.65px;top:587.17px;font-size:13.5px;color:#1b6e42;font-weight:700;transform:scaleX(0.9535)">microexcel.ru</div>

<!-- window border -->
<div class="a" style="left:0;top:0;width:930px;height:629px;border:1px solid #c4c4c4;border-top-color:#d9d3d6;border-right-color:#d5cfd2;z-index:50"></div>
</body></html>
